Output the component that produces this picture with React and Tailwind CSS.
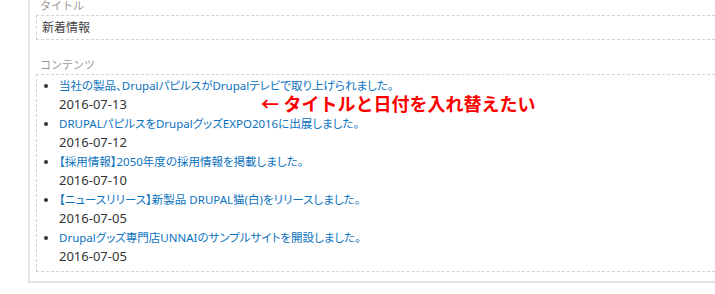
const news = [
  { title: '当社の製品、DrupalパピルスがDrupalテレビで取り上げられました。', date: '2016-07-13' },
  { title: 'DRUPALパピルスをDrupalグッズEXPO2016に出展しました。', date: '2016-07-12' },
  { title: '【採用情報】2050年度の採用情報を掲載しました。', date: '2016-07-10' },
  { title: '【ニュースリリース】新製品 DRUPAL猫(白)をリリースしました。', date: '2016-07-05' },
  { title: 'Drupalグッズ専門店UNNAIのサンプルサイトを開設しました。', date: '2016-07-05' },
]

function Field({ label, children, className = '' }) {
  return (
    <div className={className}>
      <div className="pl-[4px] text-[11px] leading-[18px] text-[#999]">{label}</div>
      <div className="border border-dashed border-[#d4d4d4] border-r-0">{children}</div>
    </div>
  )
}

export default function App() {
  return (
    <div className="h-[294px] w-full overflow-hidden bg-white font-['Noto_Sans','Noto_Sans_CJK_JP',sans-serif]">
      <div className="ml-[28px] -mt-[3px] mr-[-20px] border-b-2 border-l-2 border-[#e2e2e2] pb-[9px] pl-[6px]">
        <Field label="タイトル">
          <div className="px-[5px] py-[2px] text-[12px] leading-[19px] text-[#444]">新着情報</div>
        </Field>

        <Field label="コンテンツ" className="mt-[16px]">
          <ul className="list-disc pb-[4px] pl-[22px] pt-[2px] text-[12px] leading-[18px] text-[#333]">
            {news.map((item, i) => (
              <li key={i} className="mb-[2px]">
                <a href="#" className="text-[11.5px] text-[#0b72c0] [font-feature-settings:'palt']">
                  {item.title}
                </a>
                <div className="flex items-center">
                  <span className="text-[13px]">{item.date}</span>
                  {i === 0 ? (
                    <span className="ml-[134px] text-[18px] font-bold leading-[18px] text-[#ff0000]">
                      ← タイトルと日付を入れ替えたい
                    </span>
                  ) : null}
                </div>
              </li>
            ))}
          </ul>
        </Field>
      </div>
    </div>
  )
}
